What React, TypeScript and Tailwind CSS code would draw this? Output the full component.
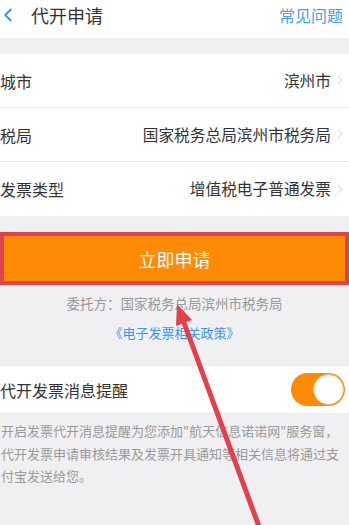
import { ChevronLeft, ChevronRight } from 'lucide-react';

const rows = [
  { label: '城市', value: '滨州市' },
  { label: '税局', value: '国家税务总局滨州市税务局' },
  { label: '发票类型', value: '增值税电子普通发票' },
];

const font = { fontFamily: '"Noto Sans CJK SC", "Noto Sans", sans-serif' };

export default function App() {
  return (
    <div
      className="relative w-full h-[525px] overflow-hidden bg-[#f0f0f2] text-[#333]"
      style={font}
    >
      {/* header */}
      <div className="h-[38px] bg-white flex items-start justify-between pt-[2px]">
        <div className="flex items-center h-[26px]">
          <ChevronLeft size={22} strokeWidth={2} className="text-[#3b8fe0] -ml-[3px]" />
          <span className="ml-[12px] text-[18px] leading-none text-[#333]">代开申请</span>
        </div>
        <span className="h-[26px] flex items-center pr-[6px] text-[16px] leading-none text-[#4aa0e6]">
          常见问题
        </span>
      </div>

      {/* form rows */}
      <div className="mt-[16px] bg-white">
        {rows.map((r, i) => (
          <div
            key={r.label}
            className={`h-[54px] flex items-center justify-between pr-[2px] ${
              i < rows.length - 1 ? 'border-b border-[#e6e6e6]' : ''
            }`}
          >
            <span className="text-[16px] leading-none">{r.label}</span>
            <span className="flex items-center text-[15.7px] leading-none">
              {r.value}
              <ChevronRight size={14} strokeWidth={1.5} className="ml-[2px] text-[#c4c4c8]" />
            </span>
          </div>
        ))}
      </div>

      {/* apply button with red frame */}
      <div className="mt-[16px] h-[53px] border-[4px] border-[#e0414a] bg-[#ff8a06] flex items-center justify-center">
        <span className="text-white text-[18px] leading-none">立即申请</span>
      </div>

      <div className="mt-[8px] text-center text-[13.5px] leading-[20px] text-[#999]">
        委托方：国家税务总局滨州市税务局
      </div>
      <div className="mt-[10px] text-center text-[13px] leading-[20px] text-[#3d95e8]">
        《电子发票相关政策》
      </div>

      {/* reminder switch */}
      <div className="mt-[22px] h-[49px] bg-white border-y border-[#e8e8e8] flex items-center justify-between pr-[4px]">
        <span className="text-[16px] leading-none">代开发票消息提醒</span>
        <div className="w-[54px] h-[33px] rounded-full bg-[#ff8a06] flex items-center justify-end p-[1px]">
          <div className="w-[31px] h-[31px] rounded-full bg-white border border-[#f0c090]" />
        </div>
      </div>

      <div className="pt-[6px] pl-[1px] text-[13px] leading-[22.5px] text-[#9a9a9a] whitespace-nowrap">
        <div>开启发票代开消息提醒为您添加"航天信息诺诺网"服务窗，</div>
        <div>代开发票申请审核结果及发票开具通知等相关信息将通过支</div>
        <div>付宝发送给您。</div>
      </div>

      {/* annotation arrow */}
      <svg
        className="absolute inset-0 pointer-events-none"
        width="349"
        height="525"
        viewBox="0 0 349 525"
      >
        <line x1="183" y1="320" x2="261" y2="532" stroke="#e2404a" strokeWidth="5" />
        <polygon points="177,304 192,320 176,326" fill="#e2404a" />
      </svg>
    </div>
  );
}
